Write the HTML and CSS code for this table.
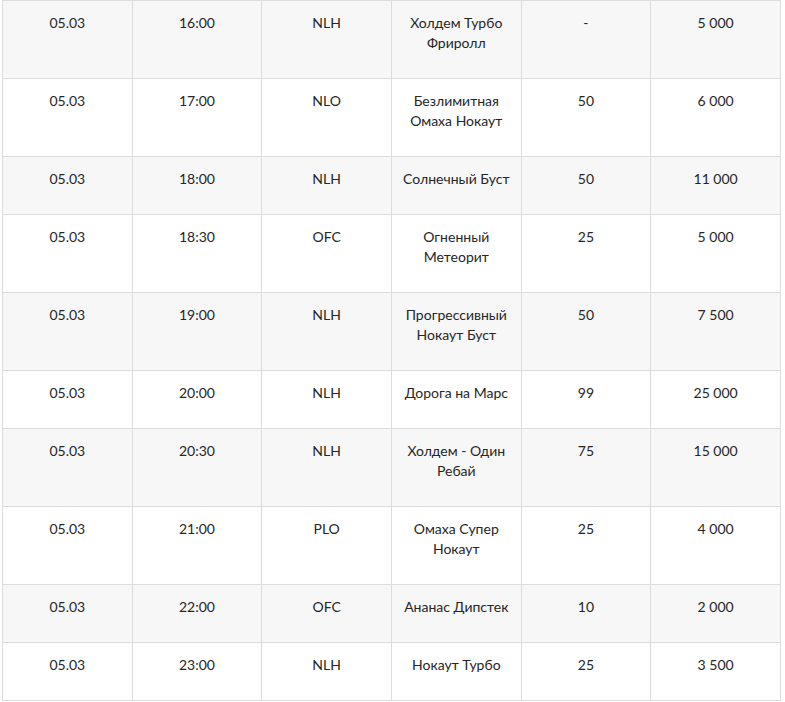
FILE: index.html
```html
<!DOCTYPE html>
<html lang="ru">
<head>
<meta charset="utf-8">
<link rel="stylesheet" href="styles.css">
</head>
<body>
<table class="schedule">
  <colgroup><col><col><col><col><col><col></colgroup>
  <tbody>
    <tr class="odd"><td>05.03</td><td>16:00</td><td>NLH</td><td>Холдем Турбо Фриролл</td><td>-</td><td>5 000</td></tr>
    <tr><td>05.03</td><td>17:00</td><td>NLO</td><td>Безлимитная Омаха Нокаут</td><td>50</td><td>6 000</td></tr>
    <tr class="odd"><td>05.03</td><td>18:00</td><td>NLH</td><td>Солнечный Буст</td><td>50</td><td>11 000</td></tr>
    <tr><td>05.03</td><td>18:30</td><td>OFC</td><td>Огненный Метеорит</td><td>25</td><td>5 000</td></tr>
    <tr class="odd"><td>05.03</td><td>19:00</td><td>NLH</td><td>Прогрессивный Нокаут Буст</td><td>50</td><td>7 500</td></tr>
    <tr><td>05.03</td><td>20:00</td><td>NLH</td><td>Дорога на Марс</td><td>99</td><td>25 000</td></tr>
    <tr class="odd"><td>05.03</td><td>20:30</td><td>NLH</td><td>Холдем - Один Ребай</td><td>75</td><td>15 000</td></tr>
    <tr><td>05.03</td><td>21:00</td><td>PLO</td><td>Омаха Супер Нокаут</td><td>25</td><td>4 000</td></tr>
    <tr class="odd"><td>05.03</td><td>22:00</td><td>OFC</td><td>Ананас Дипстек</td><td>10</td><td>2 000</td></tr>
    <tr><td>05.03</td><td>23:00</td><td>NLH</td><td>Нокаут Турбо</td><td>25</td><td>3 500</td></tr>
  </tbody>
</table>
</body>
</html>
```
FILE: styles.css
```css
html, body {
  margin: 0;
  padding: 0;
  background: #fff;
}
body {
  padding: 0 0 0 2px;
  font-family: Lato, "Noto Sans", sans-serif;
  font-size: 14px;
  line-height: 20px;
  color: #262626;
}
.schedule {
  border-collapse: collapse;
  table-layout: fixed;
  width: 779px;
}
.schedule td {
  border: 1px solid #dcdcdc;
  padding: 12px 8px 25px;
  text-align: center;
  vertical-align: top;
}
.schedule tr.odd td {
  background: #f7f7f7;
}
```
